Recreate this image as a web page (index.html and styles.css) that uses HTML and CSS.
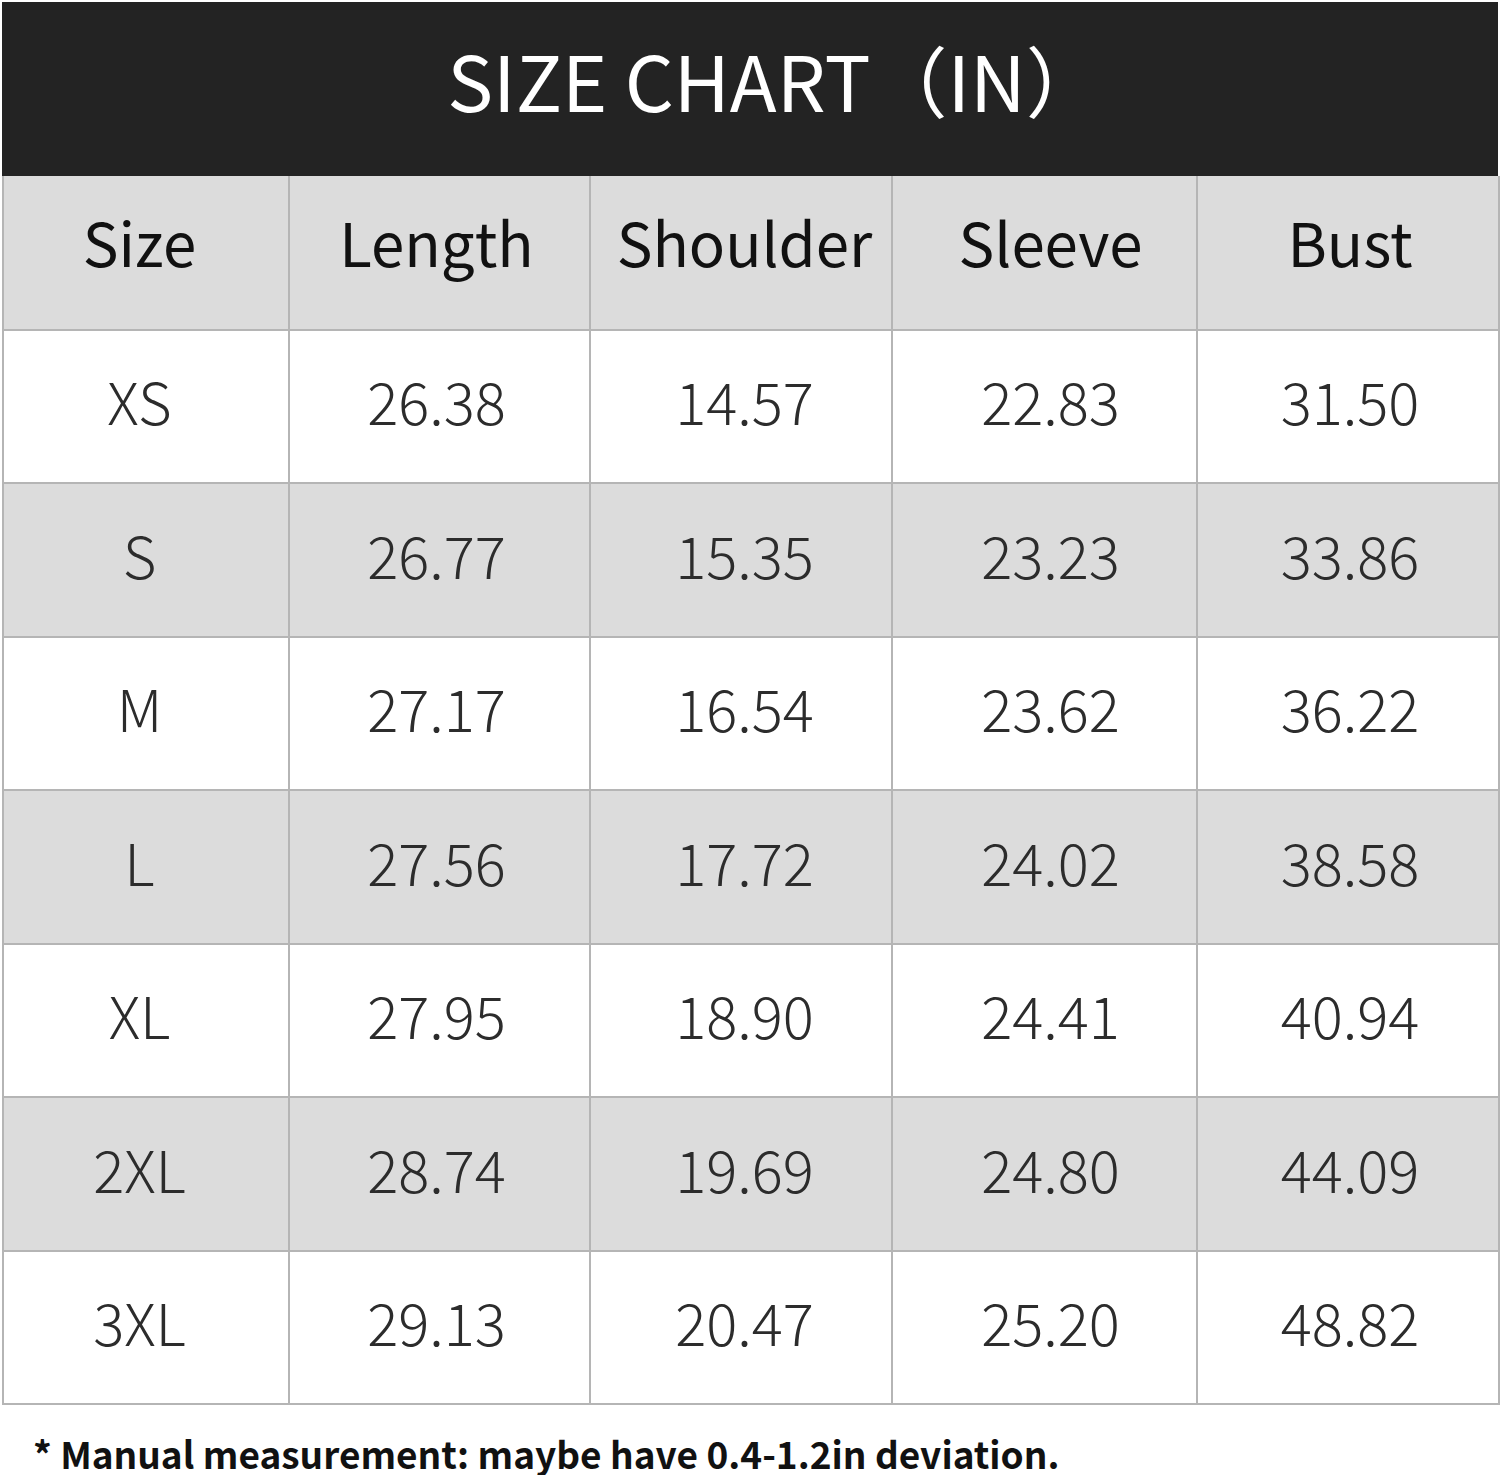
FILE: index.html
```html
<!DOCTYPE html>
<html>
<head>
<meta charset="utf-8">
<link rel="stylesheet" href="styles.css">
</head>
<body>
<div class="chart">
  <div class="title">SIZE CHART（IN）</div>
  <table class="grid">
    <colgroup>
      <col class="c1"><col class="c2"><col class="c3"><col class="c4"><col class="c5">
    </colgroup>
    <thead>
      <tr class="shade head"><th>Size</th><th>Length</th><th>Shoulder</th><th>Sleeve</th><th>Bust</th></tr>
    </thead>
    <tbody>
      <tr><td>XS</td><td>26.38</td><td>14.57</td><td>22.83</td><td>31.50</td></tr>
      <tr class="shade"><td>S</td><td>26.77</td><td>15.35</td><td>23.23</td><td>33.86</td></tr>
      <tr><td>M</td><td>27.17</td><td>16.54</td><td>23.62</td><td>36.22</td></tr>
      <tr class="shade"><td>L</td><td>27.56</td><td>17.72</td><td>24.02</td><td>38.58</td></tr>
      <tr><td>XL</td><td>27.95</td><td>18.90</td><td>24.41</td><td>40.94</td></tr>
      <tr class="shade"><td>2XL</td><td>28.74</td><td>19.69</td><td>24.80</td><td>44.09</td></tr>
      <tr><td>3XL</td><td>29.13</td><td>20.47</td><td>25.20</td><td>48.82</td></tr>
    </tbody>
  </table>
  <p class="note">* Manual measurement: maybe have 0.4-1.2in deviation.</p>
</div>
</body>
</html>
```
FILE: styles.css
```css
html, body {
  margin: 0;
  padding: 0;
  background: #ffffff;
}
body {
  font-family: "Noto Sans CJK SC", "Noto Sans", sans-serif;
}
.chart {
  width: 1496px;
  padding: 2px 0 0 2px;
}
.title {
  height: 174px;
  box-sizing: border-box;
  padding-left: 50px;
  background: #232323;
  color: #ffffff;
  font-size: 77px;
  font-weight: 400;
  line-height: 154px;
  text-align: center;
}
.grid {
  width: 1496px;
  border-collapse: collapse;
  table-layout: fixed;
}
.c1 { width: 286px; }
.c2 { width: 301px; }
.c3 { width: 302px; }
.c4 { width: 305px; }
.c5 { width: 302px; }
.grid th, .grid td {
  box-sizing: border-box;
  border: 2px solid #b5b5b5;
  height: 153.5px;
  padding: 0;
  text-align: center;
  vertical-align: middle;
  line-height: 1;
}
.grid thead th {
  border-top: none;
}
.grid th {
  font-size: 60px;
  font-weight: 400;
  color: #111111;
  padding-bottom: 22px;
}
.grid td {
  font-size: 58px;
  font-weight: 300;
  color: #2c2c2c;
  padding-bottom: 12px;
}
.grid th:nth-child(1), .grid td:nth-child(1) { padding-right: 13px; }
.grid th:nth-child(2), .grid td:nth-child(2) { padding-right: 6px; }
.grid th:nth-child(3), .grid td:nth-child(3) { padding-left: 7px; }
.grid th:nth-child(4), .grid td:nth-child(4) { padding-left: 12px; }
.grid th:nth-child(5), .grid td:nth-child(5) { padding-left: 4px; }
.shade th, .shade td {
  background: #dcdcdc;
}
.note {
  margin: 26px 0 0 31px;
  font-size: 37px;
  font-weight: 700;
  color: #111111;
  line-height: 1.2;
}
```
